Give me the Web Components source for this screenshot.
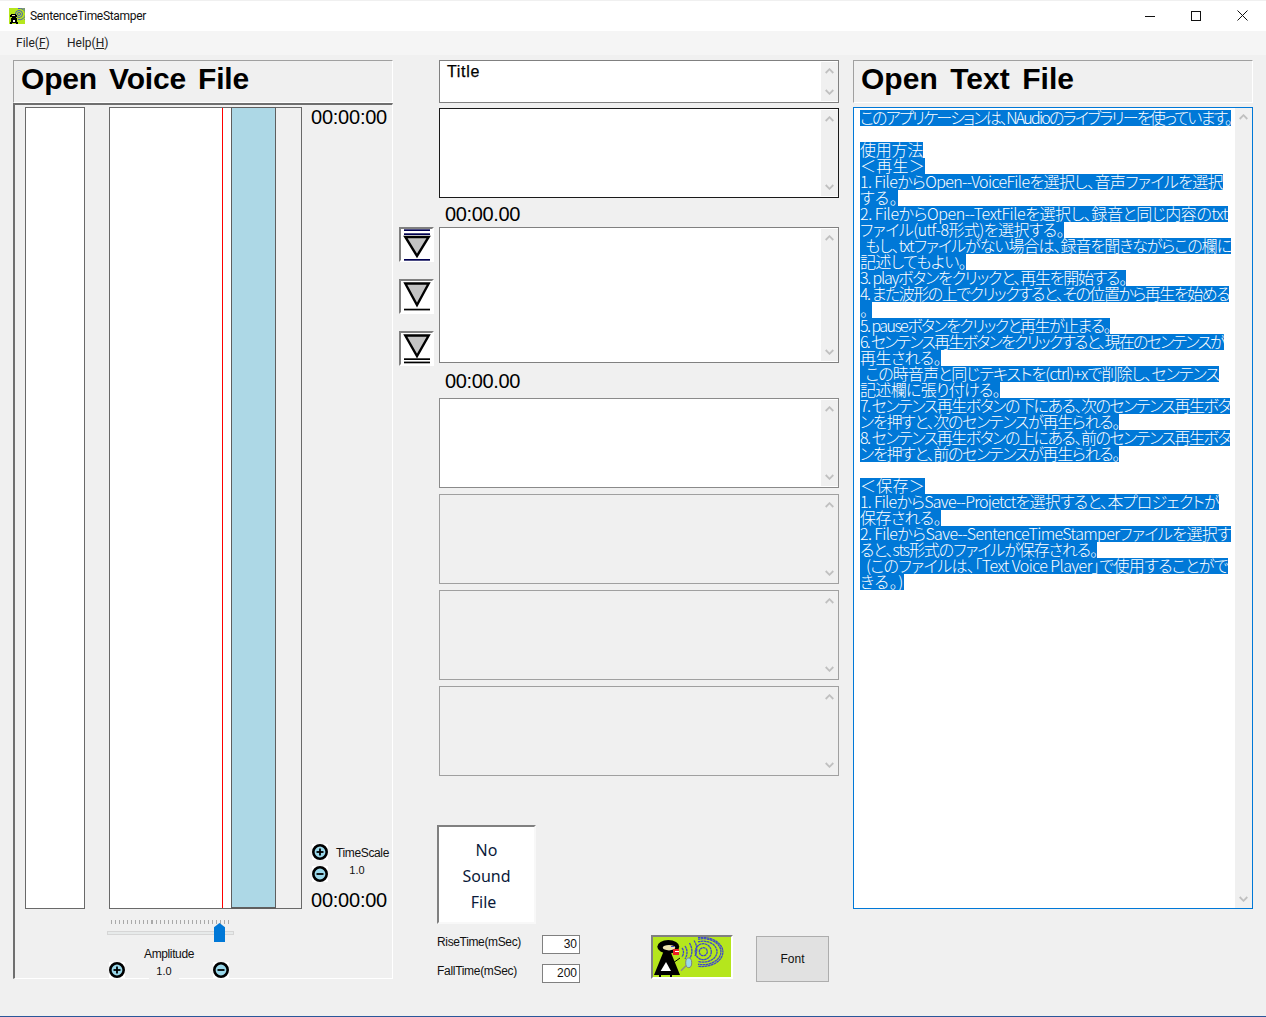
<!DOCTYPE html>
<html lang="ja">
<head>
<meta charset="utf-8">
<title>SentenceTimeStamper</title>
<style>
html,body{margin:0;padding:0;background:#f0f0f0;overflow:hidden}
body{font-family:"Liberation Sans",Arial,sans-serif;font-size:12px;color:#000}
</style>
</head>
<body>
<app-window>
  <title-bar slot="top"><fit-text w="116">SentenceTimeStamper</fit-text></title-bar>
  <menu-bar slot="top"></menu-bar>

  <section-column slot="left">
    <big-heading><fit-text w="228">Open Voice File</fit-text></big-heading>
    <voice-panel></voice-panel>
  </section-column>

  <sentence-column slot="middle"></sentence-column>

  <section-column slot="right">
    <big-heading><fit-text w="213">Open Text File</fit-text></big-heading>
    <text-panel>
      <sel-line w="371">このアプリケーションは、NAudioのライブラリーを使っています。</sel-line>
      <sel-line blank></sel-line>
      <sel-line w="63">使用方法</sel-line>
      <sel-line w="65">＜再生＞</sel-line>
      <sel-line w="363">1. FileからOpen--VoiceFileを選択し、音声ファイルを選択</sel-line>
      <sel-line w="38">する。</sel-line>
      <sel-line w="368">2. FileからOpen--TextFileを選択し、録音と同じ内容のtxt</sel-line>
      <sel-line w="204">ファイル(utf-8形式)を選択する。</sel-line>
      <sel-line w="371">  もし、txtファイルがない場合は、録音を聞きながらこの欄に</sel-line>
      <sel-line w="106">記述してもよい。</sel-line>
      <sel-line w="266">3. playボタンをクリックと、再生を開始する。</sel-line>
      <sel-line w="369">4. また波形の上でクリックすると、その位置から再生を始める</sel-line>
      <sel-line w="12">。</sel-line>
      <sel-line w="250">5. pauseボタンをクリックと再生が止まる。</sel-line>
      <sel-line w="364">6. センテンス再生ボタンをクリックすると、現在のセンテンスが</sel-line>
      <sel-line w="81">再生される。</sel-line>
      <sel-line w="359">  この時音声と同じテキストを(ctrl)+xで削除し、センテンス</sel-line>
      <sel-line w="140">記述欄に張り付ける。</sel-line>
      <sel-line w="370">7. センテンス再生ボタンの下にある、次のセンテンス再生ボタ</sel-line>
      <sel-line w="259">ンを押すと、次のセンテンスが再生られる。</sel-line>
      <sel-line w="370">8. センテンス再生ボタンの上にある、前のセンテンス再生ボタ</sel-line>
      <sel-line w="259">ンを押すと、前のセンテンスが再生られる。</sel-line>
      <sel-line blank></sel-line>
      <sel-line w="65">＜保存＞</sel-line>
      <sel-line w="359">1. FileからSave--Projetctを選択すると、本プロジェクトが</sel-line>
      <sel-line w="81">保存される。</sel-line>
      <sel-line w="371">2. FileからSave--SentenceTimeStamperファイルを選択す</sel-line>
      <sel-line w="237">ると、sts形式のファイルが保存される。</sel-line>
      <sel-line w="368">  (このファイルは、「Text Voice Player」で使用することがで</sel-line>
      <sel-line w="44">きる。)</sel-line>
    </text-panel>
  </section-column>
</app-window>

<script>
const pending = [];
function def(name, css, html, extra) {
  const tpl = document.createElement('template');
  tpl.innerHTML = `<style>${css}</style>${html}`;
  customElements.define(name, class extends HTMLElement {
    constructor() {
      super();
      this.attachShadow({mode: 'open'}).appendChild(tpl.content.cloneNode(true));
    }
    connectedCallback() { if (extra) extra(this); }
  });
}

const picture = `
<svg xmlns="http://www.w3.org/2000/svg" viewBox="0 0 78 40" style="display:block;width:100%;height:100%;overflow:hidden">
  <rect width="78" height="40" fill="#b5e61d"/>
  <path d="M14 6 L1 38 L27 38 Z" fill="#000"/>
  <ellipse cx="15.300" cy="9.700" rx="11" ry="6.700" fill="#000"/>
  <ellipse cx="16" cy="10.700" rx="6.200" ry="2.700" fill="#efe4b0"/>
  <rect x="18" y="9" width="3" height="1" fill="#3f48cc"/>
  <rect x="20" y="12" width="6" height="6" fill="#ed1c24"/>
  <rect x="22" y="14" width="4" height="1" fill="#fff"/>
  <path d="M13 25 L7.700 34 L18 34 Z" fill="#fff"/>
  <rect x="6" y="38" width="2" height="3" fill="#000"/>
  <rect x="17" y="38" width="2" height="3" fill="#000"/>
  <path d="M20 26 L27 21" stroke="#000" stroke-width="1" fill="none"/>
  <path d="M28 33.700 L33 28.700" stroke="#8a8a8a" stroke-width="1.500" fill="none"/>
  <ellipse cx="35.700" cy="25.800" rx="3" ry="4.800" fill="#99d9ea" stroke="#7f7f7f" stroke-width="1"/>
  <g fill="none" stroke="#3f48cc" stroke-width="1.300" stroke-dasharray="2.600 .4">
    <path d="M29 11 Q32 15 29 20"/>
    <path d="M32 9 Q36 15 32 22"/>
    <path d="M36.500 6 Q41 14 37 21"/>
    <path d="M41 3.500 Q46 11 42 19"/>
    <circle cx="50.300" cy="14.700" r="4"/>
    <circle cx="50.300" cy="14.700" r="8"/>
    <path d="M45 4.900 A14 10.500 0 1 1 45 24.500"/>
    <path d="M45 2.200 A18 13 0 1 1 45 27.200"/>
    <path d="M45 .6 A21 14.600 0 1 1 45 29.300"/>
  </g>
</svg>`;

def('app-window', `
  :host{display:flex;flex-direction:column;width:1266px;height:1017px;box-sizing:border-box;background:#f0f0f0;border-bottom:1px solid #2b579a;overflow:hidden}
  .main{display:flex;padding:5px 0 0 13px;flex:1;min-height:0}
  .l{display:block;width:380px;flex:none}
  .m{display:block;width:440px;margin-left:6px;flex:none}
  .r{display:block;width:400px;margin-left:14px;flex:none}
`, `<slot name="top"></slot>
  <div class="main">
    <div class="l"><slot name="left"></slot></div>
    <div class="m"><slot name="middle"></slot></div>
    <div class="r"><slot name="right"></slot></div>
  </div>`);

def('title-bar', `
  :host{display:flex;align-items:center;height:31px;box-sizing:border-box;border-top:1px solid #f0f0f0;background:#fff;font:12px Roboto,"Noto Sans",sans-serif;color:#111}
  .ic{width:16px;height:16px;margin:-1px 5px 0 9px;flex:none;background:#b5e61d;overflow:hidden}
  .t{flex:1;position:relative}
  .btn{width:46px;height:30px;flex:none;display:flex;align-items:center;justify-content:center;margin-top:-1px}
  svg{display:block}
`, `<div class="ic"><svg width="16" height="16" viewBox="0 0 16 16">
      <rect width="16" height="16" fill="#b5e61d"/>
      <g fill="none" stroke="#3f48cc" stroke-width=".9">
        <circle cx="10" cy="6" r="1.500"/>
        <circle cx="10" cy="6" r="3.500"/>
        <path d="M9 .5 A6 5.700 0 1 1 9 11.500"/>
        <path d="M10 -1 A8 7.500 0 0 1 15.500 12"/>
      </g>
      <g shape-rendering="crispEdges">
        <path d="M2 6h5v1h1v2h-1v1h1v4h1v2h-2v-1h-4v1h-2v-2h1v-4h1v-1h-2v-2h1z" fill="#000"/>
        <rect x="3" y="7" width="3" height="1" fill="#efe4b0"/>
        <rect x="4" y="12" width="2" height="2" fill="#fff"/>
      </g>
    </svg></div>
    <div class="t"><slot></slot></div>
    <div class="btn" style="margin-left:auto"><svg width="10" height="10"><path d="M0 5.500h10" stroke="#111"/></svg></div>
    <div class="btn"><svg width="10" height="10"><rect x=".5" y=".5" width="9" height="9" fill="none" stroke="#111"/></svg></div>
    <div class="btn" style="margin-right:1px"><svg width="11" height="11"><path d="M.5 .5l10 10M10.500 .5l-10 10" stroke="#111" fill="none"/></svg></div>`);

def('menu-bar', `
  :host{display:flex;height:24px;background:#f5f5f5;align-items:center;font:12px Roboto,"Noto Sans",sans-serif;color:#222;padding:0 0 1px 16px;box-sizing:border-box}
  span{display:inline-block}
  u{text-underline-offset:1px}
`, `<span style="width:51px">File(<u>F</u>)</span><span>Help(<u>H</u>)</span>`);

def('section-column', `:host{display:block}`, `<slot></slot>`);

def('big-heading', `
  :host{display:block;height:43px;box-sizing:border-box;border:1px solid #a0a0a0;border-right-color:#fff;border-bottom-color:#fff;padding:0 0 0 7px;font:bold 30px/36px "Liberation Sans",Arial,sans-serif;word-spacing:4px;color:#000}
`, `<slot></slot>`);

def('fit-text', `:host{display:inline-block;white-space:pre}`, `<slot></slot>`, el => pending.push(el));

def('scroll-rail', `
  :host{display:flex;flex-direction:column;justify-content:space-between;align-items:center;width:17px;height:100%;background:#f0f0f0;box-sizing:border-box;padding:6px 0}
  svg{display:block}
`, `<svg width="9" height="6"><path d="M.7 5L4.500 1.200 8.300 5" fill="none" stroke="#c0c0c0" stroke-width="1.800"/></svg>
    <svg width="9" height="6"><path d="M.7 1L4.500 4.800 8.300 1" fill="none" stroke="#c0c0c0" stroke-width="1.800"/></svg>`);

def('memo-box', `
  :host{display:flex;box-sizing:border-box;width:400px;height:var(--h,90px);border:1px solid var(--bc,#808080);background:var(--bg,#fff);padding:1px 0 1px 0;font:16px/20px "Liberation Sans",Arial,sans-serif;-webkit-text-stroke:.25px #000}
  .txt{flex:1;padding:0 0 0 7px;min-width:0;margin-top:0}
`, `<div class="txt"><slot></slot></div><scroll-rail></scroll-rail>`);

def('round-btn', `
  :host{display:block;width:16px;height:16px;flex:none;background:#fff}
  svg{display:block}
`, `<svg width="16" height="16" viewBox="0 0 16 16"><circle cx="8" cy="8" r="6.700" fill="#9ad8ea" stroke="#000" stroke-width="2.600"/><path d="M4.500 8h7" stroke="#000" stroke-width="1.800"/><path class="v" d="M8 4.500v7" stroke="#000" stroke-width="1.800"/></svg>`,
  el => { if (el.getAttribute('kind') === 'minus') el.shadowRoot.querySelector('.v').remove(); });

def('voice-panel', `
  :host{display:block;box-sizing:border-box;height:876px;width:380px;border:1px solid #fff;border-left:2px solid #6f6f6f;border-top:2px solid #6f6f6f;padding:2px 0 0 10px;position:relative}
  .top{display:flex;height:802px}
  .lane{box-sizing:border-box;border:1px solid #696969;background:#fff;height:802px;flex:none}
  .a{width:60px}
  .b{width:193px;margin-left:24px;display:flex;position:relative;padding:0}
  .wave{width:121px;background:#fff;position:relative;flex:none}
  .cursor{position:absolute;left:112px;top:0;bottom:0;width:1px;background:#f00}
  .blue{width:45px;flex:none;box-sizing:border-box;margin:-1px 0;height:802px;background:#add8e6;border:1px solid #5f5f5f;border-width:1px 1px 2px 1px}
  .rest{flex:1;background:#f0f0f0}
  .side{width:80px;margin-left:9px;display:flex;flex-direction:column;height:802px;flex:none}
  .clock{font:20px/20px "Liberation Sans",Arial,sans-serif;color:#000}
  .scale{display:grid;grid-template-columns:16px 1fr;column-gap:8px;row-gap:6px;margin:auto 0 0 1px}
  .scale span{font:12px/14px "Liberation Sans",Arial,sans-serif;color:#111;white-space:nowrap}
  .scale .lab{margin-top:2px}
  .scale .val{text-align:center;margin-top:-3px;padding-right:13px;font-size:11px}
  .slider{margin:0 0 0 82px;width:127px;height:35px;position:relative;padding-top:11px;box-sizing:content-box}
  .ticks{height:4px;margin:0 4px;width:118px;background:repeating-linear-gradient(90deg,#a9a9a9 0 1px,transparent 1px 4.050px)}
  .track{background:#e7eaea;border:1px solid #d6d6d6;margin-top:7px;box-sizing:content-box;height:2px}
  .thumb{position:absolute;left:107px;top:14px;width:11px;height:19px;background:#0078d7;clip-path:polygon(50% 0,100% 22%,100% 100%,0 100%,0 22%)}
  .amp{display:grid;grid-template-columns:16px 88px 16px;margin:3px 0 0 84px;width:120px;align-items:end}
  .mid{text-align:center;font:12px/14px "Liberation Sans",Arial,sans-serif;color:#111;position:relative;margin-top:-11px}
  .mid b{display:block;font:normal 11px/14px "Liberation Sans",Arial,sans-serif;width:30px;margin:3px 0 -3px 24px;background:#f0f0f0;padding-bottom:3px}
`, `<div class="top">
      <div class="lane a"></div>
      <div class="lane b">
        <div class="wave"><div class="cursor"></div></div>
        <div class="blue"></div>
        <div class="rest"></div>
      </div>
      <div class="side">
        <div class="clock" style="margin-top:0"><fit-text w="76">00:00:00</fit-text></div>
        <div class="scale">
          <round-btn></round-btn><span class="lab"><fit-text w="53">TimeScale</fit-text></span>
          <round-btn kind="minus"></round-btn><span class="val">1.0</span>
        </div>
        <div class="clock" style="margin-top:8px;margin-bottom:-1px"><fit-text w="76">00:00:00</fit-text></div>
      </div>
    </div>
    <div class="slider">
      <div class="ticks"></div><div class="track"></div><div class="thumb"></div>
    </div>
    <div class="amp">
      <round-btn></round-btn>
      <div class="mid"><fit-text w="50">Amplitude</fit-text><b>1.0</b></div>
      <round-btn kind="minus"></round-btn>
    </div>`);

def('stamp-btn', `
  :host{display:block;box-sizing:border-box;width:35px;height:35px;background:#fff;border:2px solid;border-color:#808080 #fff #fff #808080}
  svg{display:block;overflow:visible}
`, `<svg width="31" height="31" viewBox="0 0 31 31"></svg>`, el => {
  const k = el.getAttribute('kind'), s = el.shadowRoot.querySelector('svg');
  const tri = (t, a) => `<path d="M4.300 ${t}H27.700L16 ${a}Z" fill="#c3c3c3" stroke="#000" stroke-width="2.400" stroke-linejoin="miter"/>`;
  const line = (y, c) => `<rect x="3" y="${y}" width="26" height="1.700" fill="${c}"/>`;
  s.innerHTML = k === 'prev'
    ? line(0.3, '#000050') + line(4.3, '#000050') + tri(8, 27) + line(30, '#000050')
    : k === 'next'
      ? tri(2.500, 23) + line(25.300, '#000') + line(28.600, '#000')
      : tri(2.500, 24) + line(27.700, '#000');
});

def('clock-label', `
  :host{display:block;font:20px/20px "Liberation Sans",Arial,sans-serif;padding-left:6px;color:#000;height:var(--h,20px)}
`, `<slot></slot>`);

def('sound-box', `
  :host{display:flex;flex-direction:column;box-sizing:border-box;width:99px;height:99px;background:#fff;border:2px solid;border-color:#808080 #f8f8f8 #f8f8f8 #808080;font:16px/26px "Noto Sans","Open Sans",sans-serif;color:#0a1a3a;text-align:center;padding-top:10px}
`, `<div>No</div><div>Sound</div><div style="margin-left:-6px">File</div>`);

def('num-field', `
  :host{display:block;box-sizing:border-box;width:38px;height:19px;border:1px solid #808080;background:#fff;text-align:right;font:12px/17px "Liberation Sans",Arial,sans-serif;padding-right:2px;color:#111}
`, `<slot></slot>`);

def('logo-pic', `
  :host{display:block;box-sizing:border-box;width:82px;height:44px;border:2px solid;border-color:#808080 #fff #fff #808080;background:#b5e61d}
`, picture);

def('font-btn', `
  :host{display:flex;align-items:center;justify-content:center;box-sizing:border-box;width:73px;height:46px;background:#e1e1e1;border:1px solid #adadad;font:12px "Liberation Sans",Arial,sans-serif;color:#111}
`, `<slot></slot>`);

def('sentence-column', `
  :host{display:grid;grid-template-columns:35px 400px;column-gap:5px;align-items:start;align-content:start;height:100%}
  .btns{display:flex;flex-direction:column;gap:17px;padding-top:167px}
  .boxes{display:flex;flex-direction:column}
  .bottom{grid-column:1 / 3;display:grid;grid-template-columns:105px 109px 105px 73px;margin:49px 0 0 38px;grid-template-rows:auto auto}
  .sb{grid-column:1 / 5;margin-bottom:11px}
  .labs{display:grid;grid-template-columns:105px 38px;row-gap:10px;grid-column:1 / 3;align-items:start}
  .labs span{font:12px/14px "Liberation Sans",Arial,sans-serif;color:#111;white-space:nowrap}
`, `<div class="btns"><stamp-btn kind="prev"></stamp-btn><stamp-btn kind="cur"></stamp-btn><stamp-btn kind="next"></stamp-btn></div>
    <div class="boxes">
      <memo-box style="--h:43px"><fit-text w="33">Title</fit-text></memo-box>
      <memo-box style="--h:90px;--bc:#1a1a1a;margin-top:5px"></memo-box>
      <clock-label style="margin-top:6px;--h:23px"><fit-text w="75">00:00.00</fit-text></clock-label>
      <memo-box style="--h:136px;--bc:#808080"></memo-box>
      <clock-label style="margin-top:8px;--h:27px"><fit-text w="75">00:00.00</fit-text></clock-label>
      <memo-box style="--h:90px;--bc:#8a8a8a"></memo-box>
      <memo-box style="--h:90px;--bc:#a0a0a0;--bg:#f0f0f0;margin-top:6px"></memo-box>
      <memo-box style="--h:90px;--bc:#a0a0a0;--bg:#f0f0f0;margin-top:6px"></memo-box>
      <memo-box style="--h:90px;--bc:#a0a0a0;--bg:#f0f0f0;margin-top:6px"></memo-box>
    </div>
    <div class="bottom">
      <div class="sb"><sound-box></sound-box></div>
      <div class="labs">
        <span><fit-text w="84">RiseTime(mSec)</fit-text></span><num-field>30</num-field>
        <span><fit-text w="80">FallTime(mSec)</fit-text></span><num-field>200</num-field>
      </div>
      <logo-pic></logo-pic>
      <font-btn style="margin-top:1px">Font</font-btn>
    </div>`);

def('text-panel', `
  :host{display:flex;box-sizing:border-box;width:400px;height:802px;margin-top:4px;border:1px solid #0078d7;background:#fff;padding:0}
  .body{flex:1;padding:2px 0 0 6px;min-width:0;font:300 16px/14px "Noto Sans CJK JP","Noto Sans",sans-serif;font-feature-settings:"palt"}
`, `<div class="body"><slot></slot></div><scroll-rail></scroll-rail>`);

def('sel-line', `
  :host{display:block;height:16px;line-height:14px;background:#0078d7;color:#fff;white-space:pre;overflow:visible}
  :host([blank]){background:transparent}
`, `<slot></slot>`, el => {
  if (el.hasAttribute('blank')) return;
  el.style.width = el.getAttribute('w') + 'px';
  pending.push(el);
});

/* fit each text run to the width it has in the reference */
for (const el of pending) {
  const target = +el.getAttribute('w');
  const n = el.textContent.length;
  const range = document.createRange();
  range.selectNodeContents(el);
  const w = range.getBoundingClientRect().width;
  el.style.letterSpacing = ((target - w) / n).toFixed(3) + 'px';
}
</script>
</body>
</html>
